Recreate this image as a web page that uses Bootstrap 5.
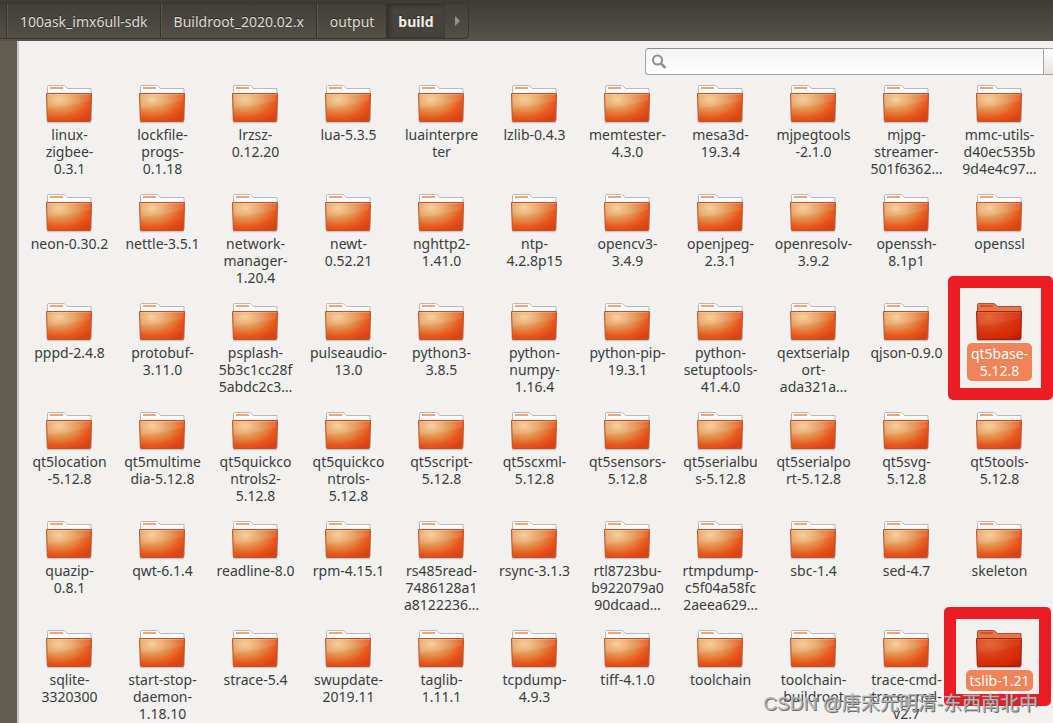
<!DOCTYPE html>
<html lang="en">
<head>
<meta charset="utf-8">
<meta name="viewport" content="width=device-width, initial-scale=1">
<title>build</title>
<link href="https://cdn.jsdelivr.net/npm/bootstrap@5.3.0/dist/css/bootstrap.min.css" rel="stylesheet">
<style>
body { font-family: "Noto Sans", "Noto Sans CJK SC", sans-serif; font-size: 14px; line-height: 17px; color: #3c3c3c; background: #f2f1f0; }
.titlebar { background: linear-gradient(#3c3b37, #57544a); height: 41px; padding: 3px 0 2px; }
.crumbs { border: 1px solid #383732; border-left: 0; border-radius: 0 5px 5px 0; background: linear-gradient(#403f3a, #514f46); padding-left: 6px; }
.crumbs a, .crumbs button { color: #dfdbd2; padding: 0 12px 0 13px; border: 0; border-left: 1px solid #33322e; box-shadow: inset 1px 0 0 #5c5a51; background: none; text-shadow: 0 -1px 0 #2a2925; }
.crumbs a.current { font-weight: 700; color: #f4f0e6; background: #45433d; box-shadow: inset 2px 1px 4px #2f2e2a; padding: 0 11px; }
.crumbs button { border: 0; box-shadow: none; padding: 0 7px 0 10px; }
.sidebar { width: 19px; background: #615e50; border-right: 2px solid #c9c7c2; }
.searchbar { padding: 7px 0 4px; height: 38px; }
.search-box { width: 399px; height: 27px; border: 1px solid #a5a3a0; border-top-color: #8c8b89; border-radius: 4px 0 0 4px; background: linear-gradient(#f4f4f4, #fff); padding-left: 5px; }
.search-box input { border: 0; background: none; outline: 0; min-width: 0; }
.search-more { width: 9px; height: 27px; border: 1px solid #a5a3a0; border-width: 1px 0 1px 0; background: linear-gradient(#fff, #e6e4e2); }
.folders { display: grid; grid-template-columns: repeat(11, 1fr); grid-auto-rows: 109px; padding: 0 7px 0 4px; }
.folders a { color: inherit; padding-top: 6px; text-align: center; text-decoration: none; white-space: nowrap; position: relative; display: flex; flex-direction: column; align-items: center; }
.folders svg { width: 48px; height: 41px; margin-right: 2px; flex: none; }
.folders a.selected span { color: #fff; background: #f08459; border-radius: 5px; padding: 2px 4px; margin-top: -1px; }
.marked::after { content: ""; position: absolute; inset: -21px -7px 6px -5px; border: 12px solid #ed1c24; border-radius: 5px; }
.marked-low::after { inset: -17px -5px 27px -9px; }
.watermark { right: 15px; bottom: 6px; font: 19px/26px "Liberation Sans", "Noto Sans CJK SC", sans-serif; color: #b4b4b4; text-shadow: 1px 1px 0 #6a6a6a; white-space: nowrap; pointer-events: none; }
</style>
</head>
<body class="vh-100 overflow-hidden d-flex flex-column position-relative">
<svg width="0" height="0" class="position-absolute" aria-hidden="true">
  <defs>
    <radialGradient id="warm" cx=".28" cy=".2" r=".9"><stop offset="0" stop-color="#f5cb92"/><stop offset=".45" stop-color="#e38f4b"/><stop offset=".75" stop-color="#e9571c"/><stop offset="1" stop-color="#d84415"/></radialGradient>
    <radialGradient id="hot" cx=".28" cy=".2" r=".95"><stop offset="0" stop-color="#e5602e"/><stop offset=".5" stop-color="#d63a12"/><stop offset=".8" stop-color="#dc2606"/><stop offset="1" stop-color="#bd1e05"/></radialGradient>
    <symbol id="folder" viewBox="0 0 48 41">
      <path d="M2 37.500h44" stroke="#cbc8c5" stroke-width="1.500"/>
      <path d="M2.500 35V1.500q0-1 1-1h15q1 0 2 1l2 2h23.500V35z" fill="#fbfbfb" stroke="#b9b8b7"/>
      <path d="M5 3h13" stroke="#f2a477" stroke-width="2"/>
      <path d="M1.500 8.500h45l-.8 27.200q0 .8-1 .8H3.300q-1 0-1-.8z" fill="url(#warm)" stroke="#b9552c"/>
      <path d="M2.500 9.500h43l-.2 6Q25 21 3 23z" fill="#fff" opacity=".1"/>
      <path d="M2 9.500h44" stroke="#fff" opacity=".25"/>
    </symbol>
    <symbol id="folder-on" viewBox="0 0 48 41">
      <path d="M2 37.500h44" stroke="#bdb9b7" stroke-width="1.500"/>
      <path d="M2.500 35V1.500q0-1 1-1h15q1 0 2 1l2 2h23.500V35z" fill="#e8764a" stroke="#a95232"/>
      <path d="M5 3h13" stroke="#dc4f25" stroke-width="2"/>
      <path d="M1.500 8.500h45l-.8 27.200q0 .8-1 .8H3.300q-1 0-1-.8z" fill="url(#hot)" stroke="#98270d"/>
      <path d="M2.500 9.500h43l-.2 6Q25 21 3 23z" fill="#fff" opacity=".05"/>
      <path d="M2 9.500h44" stroke="#fff" opacity=".12"/>
    </symbol>
  </defs>
</svg>
<header class="titlebar d-flex flex-shrink-0">
  <nav class="crumbs d-flex" aria-label="Path">
    <a class="d-flex align-items-center text-decoration-none" href="#">100ask_imx6ull-sdk</a>
    <a class="d-flex align-items-center text-decoration-none" href="#">Buildroot_2020.02.x</a>
    <a class="d-flex align-items-center text-decoration-none" href="#">output</a>
    <a class="current d-flex align-items-center text-decoration-none" href="#" aria-current="page">build</a>
    <button type="button" class="d-flex align-items-center" aria-label="Next"><svg width="6" height="10" viewBox="0 0 6 10"><path d="M0 0l5 5-5 5z" fill="#96938a"/></svg></button>
  </nav>
</header>
<div class="d-flex flex-grow-1 overflow-hidden">
  <aside class="sidebar flex-shrink-0"></aside>
  <main class="flex-grow-1">
    <div class="searchbar d-flex justify-content-end">
      <label class="search-box d-flex align-items-center">
        <svg width="16" height="16" viewBox="0 0 16 16" fill="none" stroke="#928e87" stroke-width="2"><circle cx="6.500" cy="6" r="4.500"/><path d="M9.700 9.200l4.600 4.600" stroke-width="2.600"/></svg>
        <input class="flex-grow-1" type="text" aria-label="Search">
      </label>
      <button type="button" class="search-more p-0" aria-label="Search options"></button>
    </div>
    <div class="folders">
      <a href="#"><svg><use href="#folder"/></svg><span>linux-<br>zigbee-<br>0.3.1</span></a>
      <a href="#"><svg><use href="#folder"/></svg><span>lockfile-<br>progs-<br>0.1.18</span></a>
      <a href="#"><svg><use href="#folder"/></svg><span>lrzsz-<br>0.12.20</span></a>
      <a href="#"><svg><use href="#folder"/></svg><span>lua-5.3.5</span></a>
      <a href="#"><svg><use href="#folder"/></svg><span>luainterpre<br>ter</span></a>
      <a href="#"><svg><use href="#folder"/></svg><span>lzlib-0.4.3</span></a>
      <a href="#"><svg><use href="#folder"/></svg><span>memtester-<br>4.3.0</span></a>
      <a href="#"><svg><use href="#folder"/></svg><span>mesa3d-<br>19.3.4</span></a>
      <a href="#"><svg><use href="#folder"/></svg><span>mjpegtools<br>-2.1.0</span></a>
      <a href="#"><svg><use href="#folder"/></svg><span>mjpg-<br>streamer-<br>501f6362…</span></a>
      <a href="#"><svg><use href="#folder"/></svg><span>mmc-utils-<br>d40ec535b<br>9d4e4c97…</span></a>

      <a href="#"><svg><use href="#folder"/></svg><span>neon-0.30.2</span></a>
      <a href="#"><svg><use href="#folder"/></svg><span>nettle-3.5.1</span></a>
      <a href="#"><svg><use href="#folder"/></svg><span>network-<br>manager-<br>1.20.4</span></a>
      <a href="#"><svg><use href="#folder"/></svg><span>newt-<br>0.52.21</span></a>
      <a href="#"><svg><use href="#folder"/></svg><span>nghttp2-<br>1.41.0</span></a>
      <a href="#"><svg><use href="#folder"/></svg><span>ntp-<br>4.2.8p15</span></a>
      <a href="#"><svg><use href="#folder"/></svg><span>opencv3-<br>3.4.9</span></a>
      <a href="#"><svg><use href="#folder"/></svg><span>openjpeg-<br>2.3.1</span></a>
      <a href="#"><svg><use href="#folder"/></svg><span>openresolv-<br>3.9.2</span></a>
      <a href="#"><svg><use href="#folder"/></svg><span>openssh-<br>8.1p1</span></a>
      <a href="#"><svg><use href="#folder"/></svg><span>openssl</span></a>

      <a href="#"><svg><use href="#folder"/></svg><span>pppd-2.4.8</span></a>
      <a href="#"><svg><use href="#folder"/></svg><span>protobuf-<br>3.11.0</span></a>
      <a href="#"><svg><use href="#folder"/></svg><span>psplash-<br>5b3c1cc28f<br>5abdc2c3…</span></a>
      <a href="#"><svg><use href="#folder"/></svg><span>pulseaudio-<br>13.0</span></a>
      <a href="#"><svg><use href="#folder"/></svg><span>python3-<br>3.8.5</span></a>
      <a href="#"><svg><use href="#folder"/></svg><span>python-<br>numpy-<br>1.16.4</span></a>
      <a href="#"><svg><use href="#folder"/></svg><span>python-pip-<br>19.3.1</span></a>
      <a href="#"><svg><use href="#folder"/></svg><span>python-<br>setuptools-<br>41.4.0</span></a>
      <a href="#"><svg><use href="#folder"/></svg><span>qextserialp<br>ort-<br>ada321a…</span></a>
      <a href="#"><svg><use href="#folder"/></svg><span>qjson-0.9.0</span></a>
      <a href="#" class="selected marked"><svg><use href="#folder-on"/></svg><span>qt5base-<br>5.12.8</span></a>

      <a href="#"><svg><use href="#folder"/></svg><span>qt5location<br>-5.12.8</span></a>
      <a href="#"><svg><use href="#folder"/></svg><span>qt5multime<br>dia-5.12.8</span></a>
      <a href="#"><svg><use href="#folder"/></svg><span>qt5quickco<br>ntrols2-<br>5.12.8</span></a>
      <a href="#"><svg><use href="#folder"/></svg><span>qt5quickco<br>ntrols-<br>5.12.8</span></a>
      <a href="#"><svg><use href="#folder"/></svg><span>qt5script-<br>5.12.8</span></a>
      <a href="#"><svg><use href="#folder"/></svg><span>qt5scxml-<br>5.12.8</span></a>
      <a href="#"><svg><use href="#folder"/></svg><span>qt5sensors-<br>5.12.8</span></a>
      <a href="#"><svg><use href="#folder"/></svg><span>qt5serialbu<br>s-5.12.8</span></a>
      <a href="#"><svg><use href="#folder"/></svg><span>qt5serialpo<br>rt-5.12.8</span></a>
      <a href="#"><svg><use href="#folder"/></svg><span>qt5svg-<br>5.12.8</span></a>
      <a href="#"><svg><use href="#folder"/></svg><span>qt5tools-<br>5.12.8</span></a>

      <a href="#"><svg><use href="#folder"/></svg><span>quazip-<br>0.8.1</span></a>
      <a href="#"><svg><use href="#folder"/></svg><span>qwt-6.1.4</span></a>
      <a href="#"><svg><use href="#folder"/></svg><span>readline-8.0</span></a>
      <a href="#"><svg><use href="#folder"/></svg><span>rpm-4.15.1</span></a>
      <a href="#"><svg><use href="#folder"/></svg><span>rs485read-<br>7486128a1<br>a8122236…</span></a>
      <a href="#"><svg><use href="#folder"/></svg><span>rsync-3.1.3</span></a>
      <a href="#"><svg><use href="#folder"/></svg><span>rtl8723bu-<br>b922079a0<br>90dcaad…</span></a>
      <a href="#"><svg><use href="#folder"/></svg><span>rtmpdump-<br>c5f04a58fc<br>2aeea629…</span></a>
      <a href="#"><svg><use href="#folder"/></svg><span>sbc-1.4</span></a>
      <a href="#"><svg><use href="#folder"/></svg><span>sed-4.7</span></a>
      <a href="#"><svg><use href="#folder"/></svg><span>skeleton</span></a>

      <a href="#"><svg><use href="#folder"/></svg><span>sqlite-<br>3320300</span></a>
      <a href="#"><svg><use href="#folder"/></svg><span>start-stop-<br>daemon-<br>1.18.10</span></a>
      <a href="#"><svg><use href="#folder"/></svg><span>strace-5.4</span></a>
      <a href="#"><svg><use href="#folder"/></svg><span>swupdate-<br>2019.11</span></a>
      <a href="#"><svg><use href="#folder"/></svg><span>taglib-<br>1.11.1</span></a>
      <a href="#"><svg><use href="#folder"/></svg><span>tcpdump-<br>4.9.3</span></a>
      <a href="#"><svg><use href="#folder"/></svg><span>tiff-4.1.0</span></a>
      <a href="#"><svg><use href="#folder"/></svg><span>toolchain</span></a>
      <a href="#"><svg><use href="#folder"/></svg><span>toolchain-<br>buildroot</span></a>
      <a href="#"><svg><use href="#folder"/></svg><span>trace-cmd-<br>trace-cmd-<br>v2.7</span></a>
      <a href="#" class="selected marked marked-low"><svg><use href="#folder-on"/></svg><span>tslib-1.21</span></a>
    </div>
  </main>
</div>
<div class="watermark position-absolute">CSDN @唐宋元明清-东西南北中</div>
<script src="https://cdn.jsdelivr.net/npm/bootstrap@5.3.0/dist/js/bootstrap.bundle.min.js"></script>
</body>
</html>
